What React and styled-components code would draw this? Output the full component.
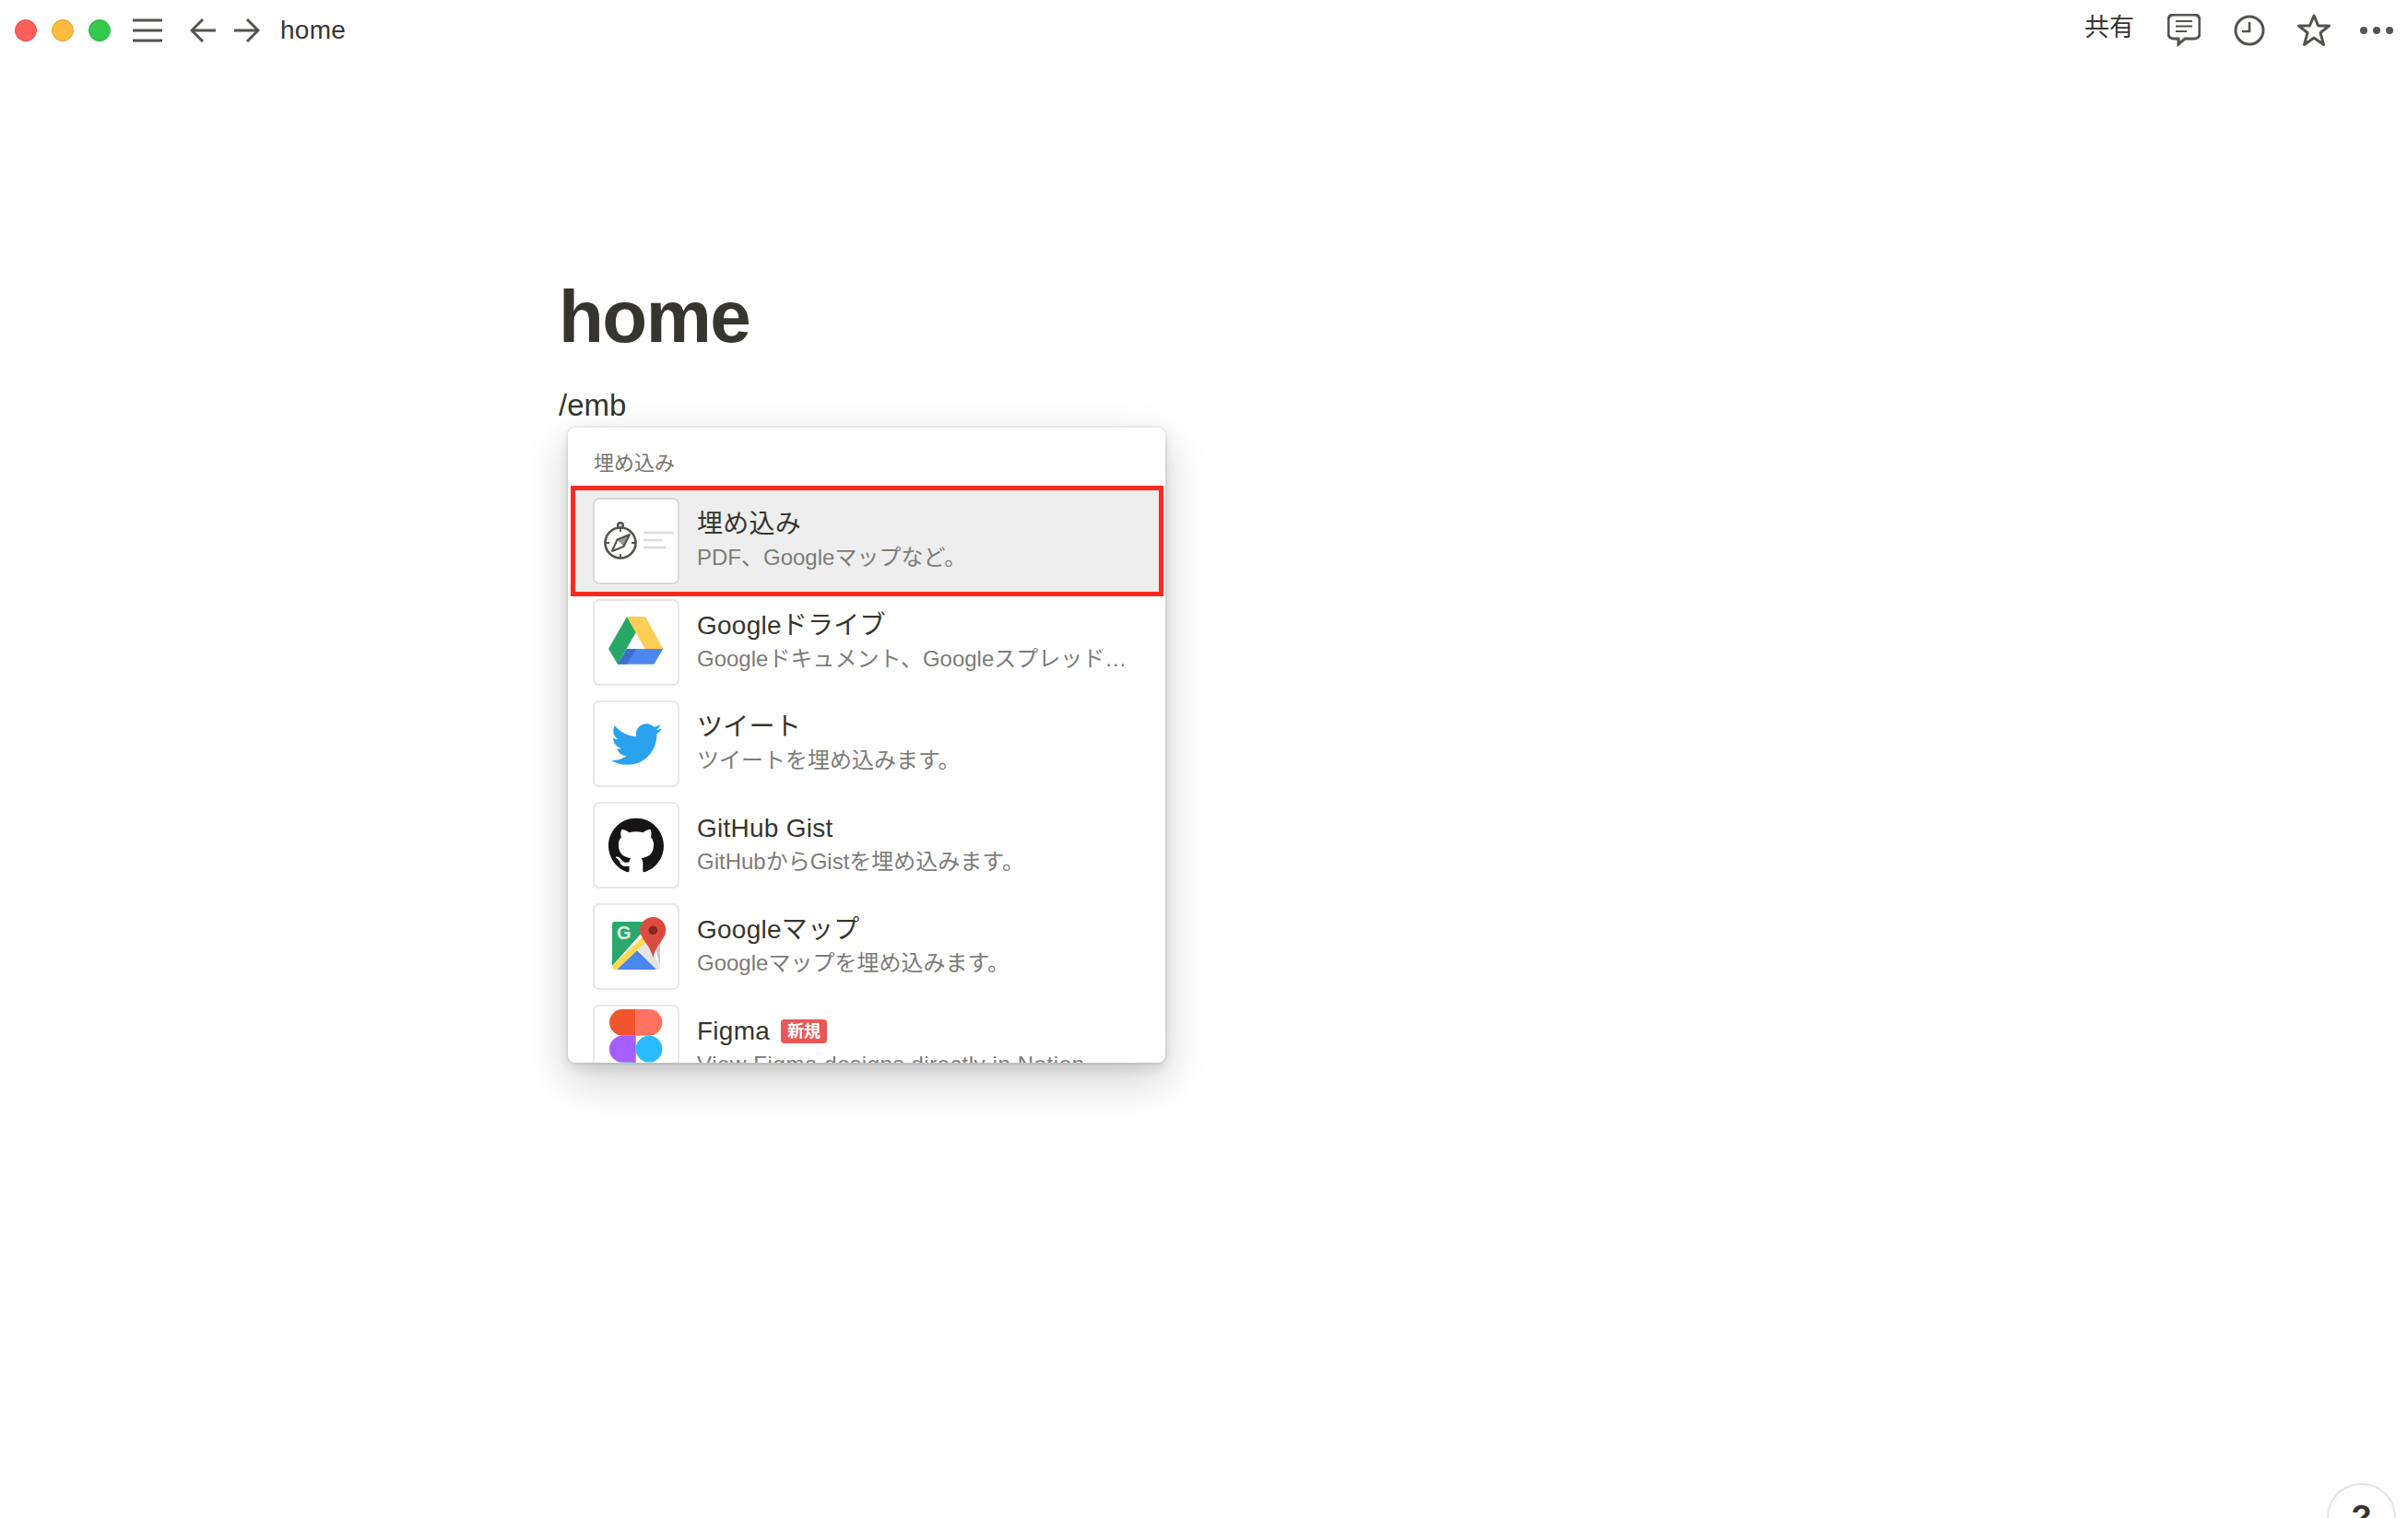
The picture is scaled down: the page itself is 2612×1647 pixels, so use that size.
import React from 'react';
import styled, { createGlobalStyle } from 'styled-components';
import { FaTwitter } from 'react-icons/fa';
import { SiGithub } from 'react-icons/si';

const GlobalStyle = createGlobalStyle`
  html, body {
    margin: 0;
    background: #fff;
    font-family: "Liberation Sans", "Noto Sans CJK JP", sans-serif;
    color: #37352f;
  }
`;

const Page = styled.div`
  position: relative;
  height: 100vh;
  overflow: hidden;
`;

const TopBar = styled.header`
  display: flex;
  align-items: center;
  justify-content: space-between;
  height: 66px;
  padding: 0 16px;
`;

const BarGroup = styled.div`
  display: flex;
  align-items: center;
`;

const Light = styled.span`
  width: 24px;
  height: 24px;
  box-sizing: border-box;
  border-radius: 50%;
  margin-right: 16px;
  background: ${(p) => p.$fill};
  border: 1px solid ${(p) => p.$edge};
`;

const BarIcon = styled.svg`
  display: block;
  flex: none;
  margin-left: ${(p) => p.$gap || 0}px;
  fill: none;
  stroke: #55534e;
  stroke-width: 3;
`;

const PageName = styled.span`
  margin-left: 22px;
  font-size: 28px;
  line-height: 34px;
  letter-spacing: 0.3px;
`;

const Share = styled.span`
  font-size: 27px;
  line-height: 34px;
  margin-top: -6px;
`;

const Content = styled.main`
  position: relative;
  padding: 233px 0 0 606px;
`;

const Title = styled.h1`
  margin: 0;
  font-size: 80px;
  line-height: 90px;
  font-weight: 700;
  letter-spacing: -1.5px;
`;

const Editable = styled.div`
  margin-top: 31px;
  font-size: 33px;
  line-height: 40px;
`;

const Menu = styled.div`
  position: absolute;
  left: 616px;
  top: 398px;
  width: 648px;
  height: 689px;
  background: #fff;
  border-radius: 8px;
  overflow: hidden;
  box-shadow: 0 0 0 2px rgba(15, 15, 15, 0.05), 0 6px 12px rgba(15, 15, 15, 0.1), 0 18px 48px rgba(15, 15, 15, 0.2);
`;

const MenuLabel = styled.div`
  height: 68px;
  box-sizing: border-box;
  padding: 26px 0 0 28px;
  font-size: 22px;
  line-height: 26px;
  color: #777672;
`;

const Row = styled.div`
  display: flex;
  align-items: center;
  gap: 19px;
  height: 110px;
  margin: 0 7px 0 8px;
  padding-left: 19px;
  background: ${(p) => (p.$selected ? '#eeeeee' : 'transparent')};
  outline: ${(p) => (p.$selected ? '5px solid #fb2a20' : 'none')};
`;

const Thumb = styled.div`
  display: flex;
  align-items: center;
  justify-content: center;
  flex: none;
  width: 94px;
  height: 94px;
  box-sizing: border-box;
  background: #fff;
  border: 2px solid ${(p) => (p.$selected ? '#d9d9d8' : '#e7e7e6')};
  border-radius: 7px;
  overflow: hidden;
`;

const RowText = styled.div`
  min-width: 0;
  flex: 1;
  padding-right: 30px;
`;

const RowTitle = styled.div`
  display: flex;
  align-items: center;
  gap: 12px;
  font-size: 28px;
  line-height: 36px;
  letter-spacing: 0.25px;
`;

const RowDesc = styled.div`
  font-size: 24px;
  line-height: 36px;
  color: #7d7c78;
  letter-spacing: ${(p) => (p.$latin ? '0.6px' : '0')};
  white-space: nowrap;
  overflow: hidden;
  text-overflow: ellipsis;
`;

const NewBadge = styled.span`
  width: 50px;
  height: 26px;
  border-radius: 4px;
  background: #eb5757;
  color: #fff;
  font-size: 18px;
  font-weight: 700;
  line-height: 26px;
  letter-spacing: 0;
  text-align: center;
`;

const HelpButton = styled.div`
  position: absolute;
  right: 13px;
  bottom: -37px;
  width: 75px;
  height: 75px;
  box-sizing: border-box;
  border: 2px solid #e3e3e2;
  border-radius: 50%;
  background: #fff;
  font-size: 36px;
  font-weight: 700;
  line-height: 71px;
  text-align: center;
`;

const CompassIcon = () => (
  <svg width="90" height="90" viewBox="0 0 90 90">
    <g fill="none" stroke="#55534e" strokeWidth="2.6">
      <circle cx="28" cy="47" r="16.5" />
      <circle cx="28" cy="28" r="2.8" />
      <path d="M28 31v4M28 59v4M12 47h4M40 47h4" strokeWidth="1.8" />
    </g>
    <path d="M38 38 31.5 51 19 56 24.5 43.5Z" fill="none" stroke="#55534e" strokeWidth="2" strokeLinejoin="round" />
    <path d="M38 38 24.5 43.5 31.5 51Z" fill="#55534e" opacity="0.6" />
    <path d="M53 36h32M53 44h20M53 52h24" stroke="#dcdcdb" strokeWidth="2.4" />
  </svg>
);

const DriveIcon = () => (
  <svg width="90" height="90" viewBox="0 0 90 90">
    <g transform="translate(15 17)">
      <path d="M20 0 30 16.700 10 51.700 0 35Z" fill="#27a866" />
      <path d="M20 0H40L59.300 35H39.600Z" fill="#fdcd55" />
      <path d="M20 35H59.300L49.300 51.700H10Z" fill="#4b87ee" />
      <path d="M20 35H30L20 51.700H10Z" fill="#3b6fd0" />
    </g>
  </svg>
);

const MapsIcon = () => (
  <svg width="90" height="90" viewBox="0 0 90 90">
    <path d="M22 18H62L19 66V21Q19 18 22 18Z" fill="#2aa86c" />
    <path d="M55 30 71 68Q71 70 68 70H66L46 47Z" fill="#e4e4e2" />
    <path d="M62 30H71V68Z" fill="#c9c9c7" />
    <path d="M46 49 67 70H24Z" fill="#4b87ee" />
    <path d="M53 33.500 19.300 65.800V67Q19.500 70 24 70L58 38Z" fill="#fdd94f" />
    <text x="24" y="37" fontSize="20" fontWeight="700" fill="#d8f0e2">G</text>
    <path d="M63.300 13C55.500 13 49.300 19.300 49.300 27 49.300 37 60 42 63.300 57.300 66.600 42 77.300 37 77.300 27 77.300 19.300 71 13 63.300 13Z" fill="#db4b40" />
    <circle cx="63.300" cy="27.300" r="4.800" fill="#85281f" />
  </svg>
);

const FigmaIcon = () => (
  <svg width="90" height="90" viewBox="0 0 90 90">
    <path d="M44.700 3H30.400a14.300 14.300 0 0 0 0 28.700H44.700Z" fill="#f2542d" />
    <path d="M44.700 3H59a14.300 14.300 0 0 1 0 28.700H44.700Z" fill="#ff7262" />
    <path d="M44.700 31.700H30.400a14.500 14.500 0 0 0 0 29H44.700Z" fill="#a55eff" />
    <circle cx="59" cy="46.200" r="14.400" fill="#2bbcff" />
    <path d="M30.400 60.700H44.700V75a14.300 14.300 0 1 1-14.300-14.300Z" fill="#0acf83" />
  </svg>
);

const items = [
  { title: '埋め込み', desc: 'PDF、Googleマップなど。', icon: <CompassIcon />, selected: true },
  { title: 'Googleドライブ', desc: 'Googleドキュメント、Googleスプレッドシートなどを埋め込みます。', icon: <DriveIcon /> },
  { title: 'ツイート', desc: 'ツイートを埋め込みます。', icon: <FaTwitter size={55} color="#2aa3ef" /> },
  { title: 'GitHub Gist', desc: 'GitHubからGistを埋め込みます。', icon: <SiGithub size={60} color="#161414" /> },
  { title: 'Googleマップ', desc: 'Googleマップを埋め込みます。', icon: <MapsIcon /> },
  { title: 'Figma', desc: 'View Figma designs directly in Notion.', icon: <FigmaIcon />, isNew: true, latin: true },
];

const App = () => (
  <Page>
    <GlobalStyle />
    <TopBar>
      <BarGroup>
        <Light $fill="#ff5f5b" $edge="#e24b47" />
        <Light $fill="#ffbb3d" $edge="#e09e2c" />
        <Light $fill="#32c94c" $edge="#2bb042" />
        <BarIcon $gap={8} width="32" height="28" viewBox="0 0 32 28" strokeWidth="3.4">
          <path d="M0 3h32M0 14h32M0 25h32" />
        </BarIcon>
        <BarIcon $gap={30} width="28" height="28" viewBox="0 0 28 28">
          <path d="M28 14H2M14 2 2 14l12 12" />
        </BarIcon>
        <BarIcon $gap={20} width="28" height="28" viewBox="0 0 28 28">
          <path d="M0 14h26M14 2l12 12-12 12" />
        </BarIcon>
        <PageName>home</PageName>
      </BarGroup>
      <BarGroup>
        <Share>共有</Share>
        <BarIcon $gap={36} width="36" height="36" viewBox="0 0 36 36">
          <path d="M7 2H29Q35 2 35 8V22Q35 28 29 28H19L12 34V28H7Q1 28 1 22V8Q1 2 7 2Z" transform="translate(0 -1)" />
          <path d="M9 8H27M9 13.500H27M9 19H21" strokeWidth="2" />
        </BarIcon>
        <BarIcon $gap={35} width="36" height="36" viewBox="0 0 36 36">
          <circle cx="18" cy="18" r="15" />
          <path d="M18 9v10H10" strokeWidth="2.600" />
        </BarIcon>
        <BarIcon $gap={34} width="36" height="36" viewBox="0 0 36 36" strokeLinejoin="round">
          <path d="M18 2 22.700 13H34.500L25 20.500 28.500 33.500 18 26 7.500 33.500 11 20.500 1.500 13H13.300Z" />
        </BarIcon>
        <BarIcon $gap={32} width="36" height="36" viewBox="0 0 36 36">
          <g fill="#55534e" stroke="none">
            <circle cx="4" cy="18" r="4" />
            <circle cx="18" cy="18" r="4" />
            <circle cx="32" cy="18" r="4" />
          </g>
        </BarIcon>
      </BarGroup>
    </TopBar>

    <Content>
      <Title>home</Title>
      <Editable>/emb</Editable>
      <Menu>
        <MenuLabel>埋め込み</MenuLabel>
        {items.map((item) => (
          <Row key={item.title} $selected={item.selected}>
            <Thumb $selected={item.selected}>{item.icon}</Thumb>
            <RowText>
              <RowTitle>
                {item.title}
                {item.isNew && <NewBadge>新規</NewBadge>}
              </RowTitle>
              <RowDesc $latin={item.latin}>{item.desc}</RowDesc>
            </RowText>
          </Row>
        ))}
      </Menu>
    </Content>

    <HelpButton>?</HelpButton>
  </Page>
);

export default App;
